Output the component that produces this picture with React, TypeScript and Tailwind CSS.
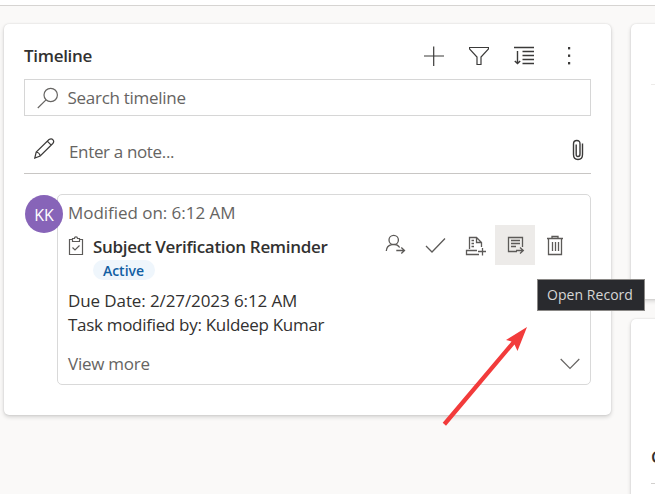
import React from "react";

type IconProps = { className?: string; children: React.ReactNode; w?: number; h?: number };

function Icon({ className = "", children, w = 20, h = 20 }: IconProps) {
  return (
    <svg width={w} height={h} viewBox={`0 0 ${w} ${h}`} fill="none" stroke="currentColor" strokeWidth="1.2" className={`block shrink-0 ${className}`}>
      {children}
    </svg>
  );
}

function Action({ active = false, children }: { active?: boolean; children: React.ReactNode }) {
  return (
    <button className={`h-10 w-10 text-[#5c5a58] ${active ? "bg-[#edebe9]" : ""}`}>
      <svg width="40" height="40" viewBox="0 0 40 40" fill="none" stroke="currentColor" strokeWidth="1.3" className="block">
        {children}
      </svg>
    </button>
  );
}

function Header() {
  return (
    <div className="flex h-[55px] items-start justify-between">
      <h2 className="mt-[20px] text-[17px] leading-6 font-semibold tracking-[-0.3px] whitespace-nowrap text-[#323130]">Timeline</h2>
      <div className="mt-[22px] mr-[12px] flex gap-[25px] text-[#3b3a39]">
        <Icon><path d="M0 10H20M9.7 .5V20" /></Icon>
        <Icon><path d="M.5 1.5H19.5V3L12 11V18.5H8V11L.5 3Z" /></Icon>
        <Icon><path d="M0 1.5H20M8.5 5.5H20M8.5 9.5H20M8.5 13.5H20M8.5 17.5H20M3.5 5V17.5M.8 15L3.5 17.6L6.2 15" strokeWidth="1.4" /></Icon>
        <Icon className="fill-current stroke-none">
          <rect x="9" y="1" width="2.2" height="2.4" /><rect x="9" y="8.5" width="2.2" height="2.4" /><rect x="9" y="16" width="2.2" height="2.4" />
        </Icon>
      </div>
    </div>
  );
}

function RecordCard() {
  return (
    <div className="relative mt-5 pl-[33px]">
      <div className="h-[191px] rounded-[5px] border border-[#d9d9d9] pl-[10px] text-[17px] whitespace-nowrap text-[#323130]">
        <div className="flex h-[30px] items-center pt-[5px] tracking-[-0.04px] text-[#666462]">Modified on: 6:12 AM</div>
        <div className="flex h-[64px] justify-between pr-[15px]">
          <div className="flex">
            <svg width="16" height="20" viewBox="0 0 16 20" fill="none" stroke="#5c5a58" strokeWidth="1.2" className="mt-[11px] shrink-0">
              <path d="M4.5 3.5H1.5V18.5H14.5V3.5H11.5M4.5 2.5H6.5Q6.5.8 8 .8T9.5 2.5H11.5V5.5H4.5ZM4.5 11.5L7 14L11.5 9.5" />
            </svg>
            <div className="ml-[9px] pt-[10px]">
              <div className="h-[25px] font-semibold leading-6 tracking-[-0.32px]">Subject Verification Reminder</div>
              <span className="flex h-5 w-[62px] items-center justify-center rounded-full bg-[#eff6fc] pr-px text-[14px] font-semibold text-[#115ea3]">Active</span>
            </div>
          </div>
          <div className="flex">
            <Action><circle cx="18.7" cy="15" r="4.7" /><path d="M11.3 26C11.5 18.5 21.5 17.5 24.7 22.5M21.3 25.5H29.5M26.3 22.5L29.5 25.5L26.3 28.5" /></Action>
            <Action><path d="M11 21L17 27L30 13.5" /></Action>
            <Action><path d="M14.5 24V12.5H21.5L26.5 17.5V22M21.5 12.5V17.5H26.5M24 29.5H11.5V25.5H22M16.5 15.5H19M16.5 18.5H19M16.5 21.5H19M23 26.5H31M27.5 23V30.5" /></Action>
            <Action active><path d="M22 26.5H13.5V12.5H27.5V22M16 15.5H25M16 18.5H25M16 21.5H21M21 25.5H28M25 22.5L28.3 25.5L25 28.5" /></Action>
            <Action><path d="M12 13.5H28M17 13V11.5H23V13M13.5 14V29.5H26.5V14M17.5 17V26M20.5 17V26M23.5 17V26" /></Action>
          </div>
        </div>
        <div className="leading-[23.5px] tracking-[-0.1px]">Due Date: 2/27/2023 6:12 AM</div>
        <div className="leading-[23.5px] tracking-[-0.3px]">Task modified by: Kuldeep Kumar</div>
        <div className="mt-[13px] flex h-[30px] items-center justify-between pr-[10px] tracking-[-0.25px] text-[#666462]">
          <span>View more</span>
          <Icon h={12} className="mb-px"><path d="M.7 1L10 10.3L19.3 1" /></Icon>
        </div>
      </div>
      <div className="absolute top-[1px] left-[1px] flex h-[38px] w-[38px] items-center justify-center rounded-full bg-[#8764b8] pt-[2px] text-[16px] text-white">KK</div>
    </div>
  );
}

export default function App() {
  return (
    <div className="relative h-[494px] w-[655px] overflow-hidden bg-[#faf9f8] font-['Open_Sans','Noto_Sans',sans-serif]">
      <div className="h-[6px] border-b border-[#d6d4d2] bg-white" />
      <div className="flex items-start gap-5 pt-[18px] pl-1">
        <main className="h-[391px] w-[607px] shrink-0 rounded-[5px] bg-white px-5 shadow-[0_2px_4px_rgba(0,0,0,0.16),0_0_2px_rgba(0,0,0,0.13)]">
          <Header />
          <div className="flex h-[37px] items-center border border-[#d6d6d6] pl-[12px] text-[17px] tracking-[-0.28px] text-[#666462]">
            <Icon w={22} h={22}><circle cx="13.7" cy="8" r="6.7" /><path d="M9 12.8L.8 21" /></Icon>
            <span className="mt-px ml-[8.5px] whitespace-nowrap">Search timeline</span>
          </div>
          <div className="flex h-[58px] items-start border-b border-[#c8c6c4] pl-[10px] text-[#3b3a39]">
            <Icon w={21} h={21} className="mt-[22px]"><path d="M.8 20L2.2 14L15 1.5Q17.5 0 19 1.8T18.8 5.5L6.2 18Z M2.2 14Q5.5 14.5 6.2 18M13.3 3.2L17.2 7.1" /></Icon>
            <span className="mt-[24px] ml-[14px] text-[17px] leading-6 tracking-[-0.35px] whitespace-nowrap text-[#666462]">Enter a note...</span>
            <Icon w={12} h={22} className="mt-[23px] mr-[7px] ml-auto"><path d="M10.5 4.5V15.5Q10.5 20.5 6 20.5T1.5 15.5V5Q1.5 1.5 4.8 1.5T8 5V15Q8 17.5 6 17.5T4.2 15V5.5" strokeWidth="1.4" /></Icon>
          </div>
          <RecordCard />
        </main>
        <aside className="flex w-[60px] shrink-0 flex-col gap-5">
          <section className="h-[275px] rounded-[5px] bg-white pt-[60px] pl-5 shadow-[0_2px_4px_rgba(0,0,0,0.16),0_0_2px_rgba(0,0,0,0.13)]">
            <div className="border-b border-[#edebe9]" />
          </section>
          <section className="h-[220px] rounded-[5px] bg-white pt-[126px] pl-5 shadow-[0_2px_4px_rgba(0,0,0,0.16),0_0_2px_rgba(0,0,0,0.13)]">
            <div className="h-[39px] border-b border-[#d2d0ce] text-[17px] leading-6 font-semibold text-[#323130]">C</div>
          </section>
        </aside>
      </div>
      <div className="absolute top-[279px] left-[537px] flex h-8 w-[108px] items-center justify-center border border-[#8a8886] bg-[#292a2e] pr-[2px] pb-[2px] text-[14px] tracking-[0.05px] whitespace-nowrap text-[#d6d6d6]">Open Record</div>
      <svg className="absolute top-[320px] left-[435px]" width="100" height="110" viewBox="435 320 100 110">
        <path d="M442.7 422.7L446 425.7L514.5 344.5L517.5 351L527 327L506 340L511.5 341.5Z" fill="#f23b3b" />
      </svg>
    </div>
  );
}
